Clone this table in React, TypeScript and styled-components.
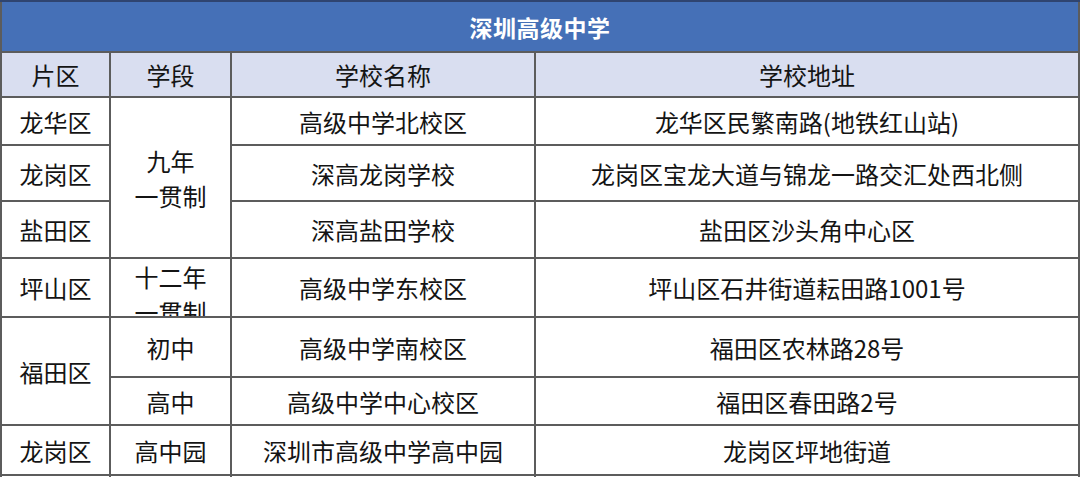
import styled, { createGlobalStyle } from "styled-components";

const GlobalStyle = createGlobalStyle`
  html, body {
    margin: 0;
    padding: 0;
    background: #ffffff;
  }
  body {
    font-family: "Noto Sans CJK SC", "Noto Sans", sans-serif;
    color: #141414;
  }
`;

const Table = styled.div`
  display: grid;
  grid-template-columns: 107px 119px 302px 542px;
  grid-template-rows: 49px 43px 46px 54px 55px 57px 58px 46px 48px 50px;
  gap: 2px;
  width: 1080px;
  box-sizing: border-box;
  padding: 0 2px 2px;
  border-top: 2px solid #2f4470;
  background: #5c5c5c;
`;

const Title = styled.div`
  grid-column: 1 / -1;
  display: flex;
  align-items: center;
  justify-content: center;
  background: #4570b7;
  color: #ffffff;
  font-size: 23px;
  font-weight: 700;
  letter-spacing: 0.5px;
`;

const Cell = styled.div<{ $head?: boolean; $col?: number; $row?: string }>`
  display: flex;
  flex-direction: column;
  justify-content: safe center;
  align-items: center;
  overflow: hidden;
  background: ${(p) => (p.$head ? "#d9def0" : "#ffffff")};
  font-size: 24px;
  line-height: 35px;
  text-align: center;
  white-space: nowrap;
  ${(p) => (p.$col ? `grid-column: ${p.$col};` : "")}
  ${(p) => (p.$row ? `grid-row: ${p.$row};` : "")}
`;

const heads = ["片区", "学段", "学校名称", "学校地址"];

function App() {
  return (
    <>
      <GlobalStyle />
      <Table>
        <Title>深圳高级中学</Title>
        {heads.map((h) => (
          <Cell key={h} $head>
            {h}
          </Cell>
        ))}

        <Cell $col={1} $row="3">龙华区</Cell>
        <Cell $col={2} $row="3 / span 3">
          <span>九年</span>
          <span>一贯制</span>
        </Cell>
        <Cell $col={3} $row="3">高级中学北校区</Cell>
        <Cell $col={4} $row="3">龙华区民繁南路(地铁红山站)</Cell>

        <Cell $col={1} $row="4">龙岗区</Cell>
        <Cell $col={3} $row="4">深高龙岗学校</Cell>
        <Cell $col={4} $row="4">龙岗区宝龙大道与锦龙一路交汇处西北侧</Cell>

        <Cell $col={1} $row="5">盐田区</Cell>
        <Cell $col={3} $row="5">深高盐田学校</Cell>
        <Cell $col={4} $row="5">盐田区沙头角中心区</Cell>

        <Cell $col={1} $row="6">坪山区</Cell>
        <Cell $col={2} $row="6">
          <span>十二年</span>
          <span>一贯制</span>
        </Cell>
        <Cell $col={3} $row="6">高级中学东校区</Cell>
        <Cell $col={4} $row="6">坪山区石井街道耘田路1001号</Cell>

        <Cell $col={1} $row="7 / span 2">福田区</Cell>
        <Cell $col={2} $row="7">初中</Cell>
        <Cell $col={3} $row="7">高级中学南校区</Cell>
        <Cell $col={4} $row="7">福田区农林路28号</Cell>

        <Cell $col={2} $row="8">高中</Cell>
        <Cell $col={3} $row="8">高级中学中心校区</Cell>
        <Cell $col={4} $row="8">福田区春田路2号</Cell>

        <Cell $col={1} $row="9">龙岗区</Cell>
        <Cell $col={2} $row="9">高中园</Cell>
        <Cell $col={3} $row="9">深圳市高级中学高中园</Cell>
        <Cell $col={4} $row="9">龙岗区坪地街道</Cell>

        <Cell $col={1} $row="10" />
        <Cell $col={2} $row="10" />
        <Cell $col={3} $row="10" />
        <Cell $col={4} $row="10" />
      </Table>
    </>
  );
}

export default App;
